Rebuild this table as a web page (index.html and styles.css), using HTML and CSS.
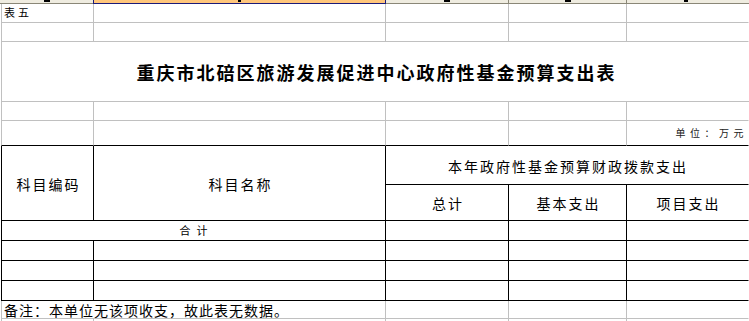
FILE: index.html
```html
<!DOCTYPE html>
<html lang="zh-CN">
<head>
<meta charset="utf-8">
<title>重庆市北碚区旅游发展促进中心政府性基金预算支出表</title>
<link rel="stylesheet" href="styles.css">
</head>
<body>
<div class="colbar">
  <div class="seg seg-a"><span class="mark"></span></div>
  <div class="seg seg-b"><span class="mark mark-thin"></span></div>
  <div class="seg seg-c"><span class="mark"></span></div>
  <div class="seg seg-d"><span class="mark"></span></div>
  <div class="seg seg-e"><span class="mark mark-short"></span></div>
  <div class="seg seg-rest"></div>
</div>
<div class="sheet">
  <!-- row 1 -->
  <div class="cell first left"><span class="small sheetno">表五</span></div>
  <div class="cell"></div><div class="cell"></div><div class="cell"></div><div class="cell last"></div>
  <!-- row 2 -->
  <div class="cell first"></div>
  <div class="cell"></div><div class="cell"></div><div class="cell"></div><div class="cell last"></div>
  <!-- row 3 title -->
  <div class="cell first title-cell"><h1 class="title">重庆市北碚区旅游发展促进中心政府性基金预算支出表</h1></div>
  <!-- row 4 -->
  <div class="cell first"></div>
  <div class="cell"></div><div class="cell"></div><div class="cell"></div><div class="cell last"></div>
  <!-- row 5 -->
  <div class="cell first bb"></div>
  <div class="cell bb"></div><div class="cell bb"></div><div class="cell bb"></div>
  <div class="cell bb last right"><span class="small unit">单位：万元</span></div>
  <!-- header -->
  <div class="cell first blk head-code"><span class="hd">科目编码</span></div>
  <div class="cell blk head-name"><span class="hd">科目名称</span></div>
  <div class="cell blk last head-group"><span class="hd">本年政府性基金预算财政拨款支出</span></div>
  <div class="cell blk"><span class="hd">总计</span></div>
  <div class="cell blk"><span class="hd">基本支出</span></div>
  <div class="cell blk last"><span class="hd">项目支出</span></div>
  <!-- total row -->
  <div class="cell first blk span2"><span class="small total">合计</span></div>
  <div class="cell blk"></div><div class="cell blk"></div><div class="cell blk last"></div>
  <!-- empty data rows -->
  <div class="cell first blk"></div><div class="cell blk"></div><div class="cell blk"></div><div class="cell blk"></div><div class="cell blk last"></div>
  <div class="cell first blk"></div><div class="cell blk"></div><div class="cell blk"></div><div class="cell blk"></div><div class="cell blk last"></div>
  <div class="cell first blk"></div><div class="cell blk"></div><div class="cell blk"></div><div class="cell blk"></div><div class="cell blk last"></div>
  <!-- note row -->
  <div class="cell first span2 left"><span class="note">备注：本单位无该项收支，故此表无数据。</span></div>
  <div class="cell"></div><div class="cell"></div><div class="cell last"></div>
  <!-- trailing row -->
  <div class="cell first"></div>
  <div class="cell"></div><div class="cell"></div><div class="cell"></div><div class="cell last"></div>
</div>
</body>
</html>
```

FILE: styles.css
```css
html, body {
  margin: 0;
  padding: 0;
  background: #ffffff;
}
body {
  width: 749px;
  height: 321px;
  overflow: hidden;
  font-family: "Noto Sans CJK SC", "Noto Sans", sans-serif;
  color: #000;
}

/* column header strip */
.colbar {
  display: flex;
  height: 4px;
}
.seg {
  box-sizing: border-box;
  height: 4px;
  background: #efece0;
  border-bottom: 1px solid #8a8777;
  display: flex;
  justify-content: center;
  align-items: flex-start;
  flex: none;
}
.seg-a { width: 93px; }
.seg-b {
  width: 293px;
  background: #ffc67c;
  border-left: 1px solid #1a1a7a;
  border-right: 1px solid #1a1a7a;
  border-bottom-color: #1a1a7a;
}
.seg-c { width: 123px; border-right: 1px solid #8a8777; }
.seg-d { width: 118px; border-right: 1px solid #8a8777; }
.seg-e { width: 118px; }
.seg-rest { flex: 1; }
.mark {
  width: 6px;
  height: 2px;
  background: #000;
}
.mark-thin { width: 3px; }
.mark-short { width: 4px; }

/* sheet grid */
.sheet {
  display: grid;
  grid-template-columns: 93px 292px 123px 118px 122px;
  grid-template-rows: 19px 19px 60px 19px 25px 39px 36px 20px 20px 20px 20px 18px 3px;
  margin-left: 1px;
  width: max-content;
}
.cell {
  box-sizing: border-box;
  border-right: 1px solid #c0c0c0;
  border-bottom: 1px solid #c0c0c0;
  display: flex;
  align-items: center;
  justify-content: center;
  white-space: nowrap;
  min-width: 0;
}
.first { border-left: 1px solid #c0c0c0; }
.bb { border-bottom-color: #000; }
.blk { border-color: #000; }
.left { justify-content: flex-start; }
.right { justify-content: flex-end; }
.cell.last { border-right-color: transparent; }

.span2 { grid-column: span 2; }
.title-cell {
  grid-column: span 5;
  border-right: none;
}
.head-code, .head-name { grid-row: span 2; }
.head-group { grid-column: span 3; }

.title {
  margin: 0;
  font-size: 18px;
  font-weight: 700;
  line-height: 1;
  letter-spacing: 2px;
  padding-left: 2px;
  padding-top: 1px;
}
.hd {
  font-size: 14px;
  line-height: 1;
  letter-spacing: 2px;
  padding-left: 2px;
  padding-top: 1px;
}
.small {
  font-size: 10px;
  line-height: 1;
}
.sheetno {
  font-size: 11px;
  letter-spacing: 3px;
  padding-left: 2px;
  margin-top: -1px;
}
.unit {
  letter-spacing: 4.5px;
  padding-left: 4px;
  color: #222;
}
.total {
  font-size: 11px;
  letter-spacing: 6px;
  padding-left: 6px;
}
.note {
  font-size: 14px;
  line-height: 1;
  letter-spacing: 1px;
  padding-left: 2px;
  padding-top: 1px;
}
```
